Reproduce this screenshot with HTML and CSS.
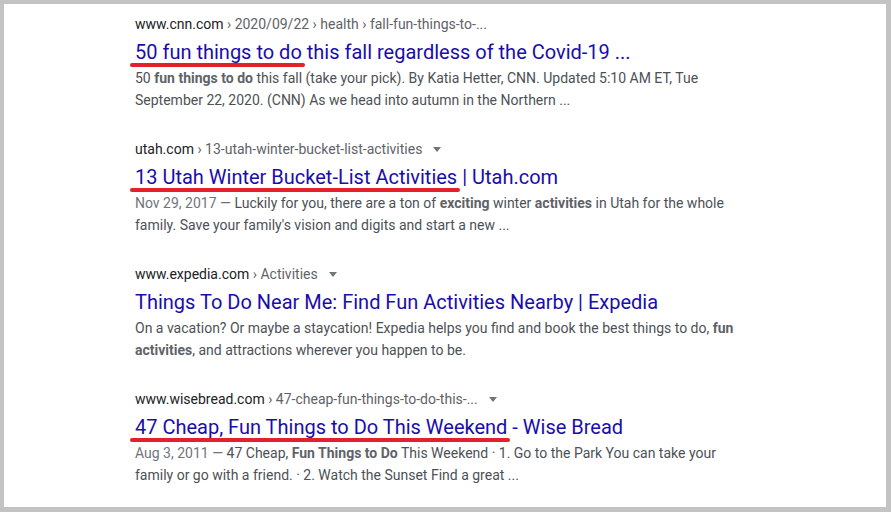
FILE: index.html
```html
<!DOCTYPE html>
<html lang="en">
<head>
<meta charset="utf-8">
<title>Search results</title>
<link rel="stylesheet" href="styles.css">
</head>
<body>
<div class="frame">
  <div class="results">
    <div class="result">
      <div class="url"><span class="domain">www.cnn.com</span><span class="path"> › 2020/09/22 › health › fall-fun-things-to-...</span></div>
      <h3 class="title"><span class="mark m1">50 fun things to do</span> this fall regardless of the Covid-19 ...</h3>
      <div class="snippet">50 <b>fun things to do</b> this fall (take your pick). By Katia Hetter, CNN. Updated 5:10 AM ET, Tue September 22, 2020. (CNN) As we head into autumn in the Northern ...</div>
    </div>
    <div class="result">
      <div class="url"><span class="domain">utah.com</span><span class="path"> › 13-utah-winter-bucket-list-activities</span><span class="caret"></span></div>
      <h3 class="title"><span class="mark m2">13 Utah Winter Bucket-List Activities</span> | Utah.com</h3>
      <div class="snippet"><span class="date">Nov 29, 2017 — </span>Luckily for you, there are a ton of <b>exciting</b> winter <b>activities</b> in Utah for the whole family. Save your family's vision and digits and start a new ...</div>
    </div>
    <div class="result">
      <div class="url"><span class="domain">www.expedia.com</span><span class="path"> › Activities</span><span class="caret"></span></div>
      <h3 class="title">Things To Do Near Me: Find Fun Activities Nearby | Expedia</h3>
      <div class="snippet">On a vacation? Or maybe a staycation! Expedia helps you find and book the best things to do, <b>fun activities</b>, and attractions wherever you happen to be.</div>
    </div>
    <div class="result">
      <div class="url"><span class="domain">www.wisebread.com</span><span class="path"> › 47-cheap-fun-things-to-do-this-...</span><span class="caret"></span></div>
      <h3 class="title"><span class="mark m4">47 Cheap, Fun Things to Do This Weekend</span> - Wise Bread</h3>
      <div class="snippet"><span class="date">Aug 3, 2011 — </span>47 Cheap, <b>Fun Things to Do</b> This Weekend · 1. Go to the Park You can take your family or go with a friend. · 2. Watch the Sunset Find a great ...</div>
    </div>
  </div>
</div>
</body>
</html>
```
FILE: styles.css
```css
html, body {
  margin: 0;
  padding: 0;
  background: #c3c3c3;
}
body {
  width: 891px;
  height: 512px;
  box-sizing: border-box;
  padding: 4px 5px 5px 4px;
  font-family: Roboto, "Liberation Sans", Arial, sans-serif;
}
.frame {
  background: #ffffff;
  height: 100%;
  box-sizing: border-box;
  padding: 9px 0 0 131px;
  overflow: hidden;
}
.results {
  width: 600px;
  display: flex;
  flex-direction: column;
  gap: 27px;
}
.result {
  display: flex;
  flex-direction: column;
}
.url {
  font-size: 14px;
  line-height: 22px;
  color: #202124;
  white-space: nowrap;
  display: flex;
  align-items: center;
}
.path {
  color: #5f6368;
  white-space: pre;
}
.caret {
  display: inline-block;
  width: 0;
  height: 0;
  margin-left: 11px;
  margin-top: 1px;
  border-left: 4.5px solid transparent;
  border-right: 4.5px solid transparent;
  border-top: 5px solid #70757a;
}
.title {
  margin: 3px 0 1px 0;
  font-size: 20px;
  font-weight: 400;
  line-height: 28px;
  color: #1a0dab;
  white-space: nowrap;
}
.mark {
  position: relative;
}
.mark::after {
  content: "";
  position: absolute;
  left: -5px;
  right: -3px;
  bottom: -3px;
  height: 4px;
  border-radius: 3px;
  background: #e3202b;
}
.snippet {
  font-size: 14px;
  line-height: 22px;
  color: #4d5156;
}
.snippet b {
  font-weight: 700;
  color: #5f6368;
}
.date {
  color: #70757a;
}
```
